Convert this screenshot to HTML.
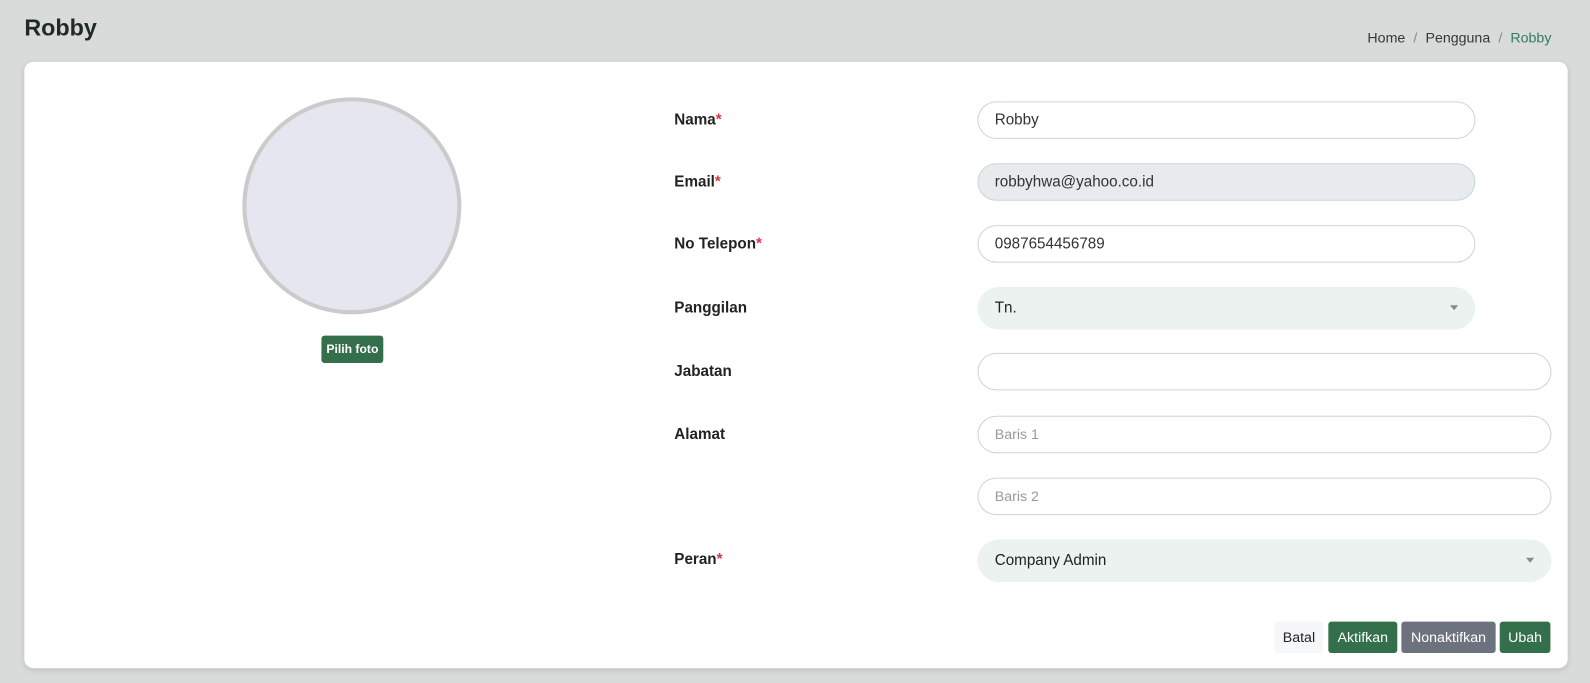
<!DOCTYPE html>
<html><head><style>
*{box-sizing:border-box;margin:0;padding:0}
body{width:1590px;height:683px;background:#d9dbda;font-family:"Liberation Sans",Roboto,sans-serif;overflow:hidden;color:#212529}
.w{position:relative;width:1568px;height:674px;transform:scale(1.014);transform-origin:0 0}
h1{position:absolute;left:24px;top:14px;font-size:23px;font-weight:bold;color:#1f2a27}
.bc{position:absolute;right:38px;top:29px;font-size:14px;color:#2f3a37}
.bc span.s{color:#888;margin:0 8px}
.bc .a{color:#2e7d63}
.card{position:absolute;left:24px;top:61px;width:1522px;height:598px;background:#fff;border-radius:9px;box-shadow:0 2px 6px rgba(0,0,0,.12)}
.av{position:absolute;left:239px;top:96px;width:216px;height:214px;border-radius:50%;background:#e6e6f0;border:4px solid #cbcbcb}
.pf{position:absolute;left:317px;top:331px;width:61px;height:27px;background:#336f4a;color:#fff;font-size:12px;font-weight:bold;border-radius:3px;text-align:center;line-height:27px}
.lb{position:absolute;left:665px;font-size:15px;font-weight:bold;color:#222}
.lb i{color:#dc3545;font-style:normal}
.in{position:absolute;left:964px;height:37px;border:1px solid #c9d6d3;border-radius:19px;font-size:15px;color:#333;padding-left:16px;line-height:35px}
.sel{position:absolute;left:964px;height:42px;border-radius:21px;background:#ebf2ef;font-size:15px;color:#222;padding-left:17px;line-height:42px}
.sel:after{content:"";position:absolute;right:17px;top:18px;border:4px solid transparent;border-top:5px solid #888}
.ph{color:#999;font-size:14px}
.btn{position:absolute;top:613px;height:31px;line-height:31px;font-size:14px;border-radius:3px;text-align:center;color:#fff}
</style></head><body><div class="w">
<h1>Robby</h1>
<div class="bc">Home<span class="s">/</span>Pengguna<span class="s">/</span><span class="a">Robby</span></div>
<div class="card"></div>
<div class="av"></div>
<div class="pf">Pilih foto</div>
<div class="lb" style="top:110px">Nama<i>*</i></div>
<div class="lb" style="top:171px">Email<i>*</i></div>
<div class="lb" style="top:232px">No Telepon<i>*</i></div>
<div class="lb" style="top:295px">Panggilan</div>
<div class="lb" style="top:358px">Jabatan</div>
<div class="lb" style="top:420px">Alamat</div>
<div class="lb" style="top:543px">Peran<i>*</i></div>
<div class="in" style="top:100px;width:491px">Robby</div>
<div class="in" style="top:161px;width:491px;background:#e8ebed">robbyhwa@yahoo.co.id</div>
<div class="in" style="top:222px;width:491px">0987654456789</div>
<div class="sel" style="top:283px;width:491px">Tn.</div>
<div class="in" style="top:348px;width:566px"></div>
<div class="in ph" style="top:410px;width:566px">Baris 1</div>
<div class="in ph" style="top:471px;width:566px">Baris 2</div>
<div class="sel" style="top:532px;width:566px">Company Admin</div>
<div class="btn" style="left:1257px;width:48px;background:#f6f7f9;color:#222">Batal</div>
<div class="btn" style="left:1310px;width:68px;background:#336f4a">Aktifkan</div>
<div class="btn" style="left:1382px;width:93px;background:#6c737e">Nonaktifkan</div>
<div class="btn" style="left:1479px;width:50px;background:#336f4a">Ubah</div>
</div></body></html>
